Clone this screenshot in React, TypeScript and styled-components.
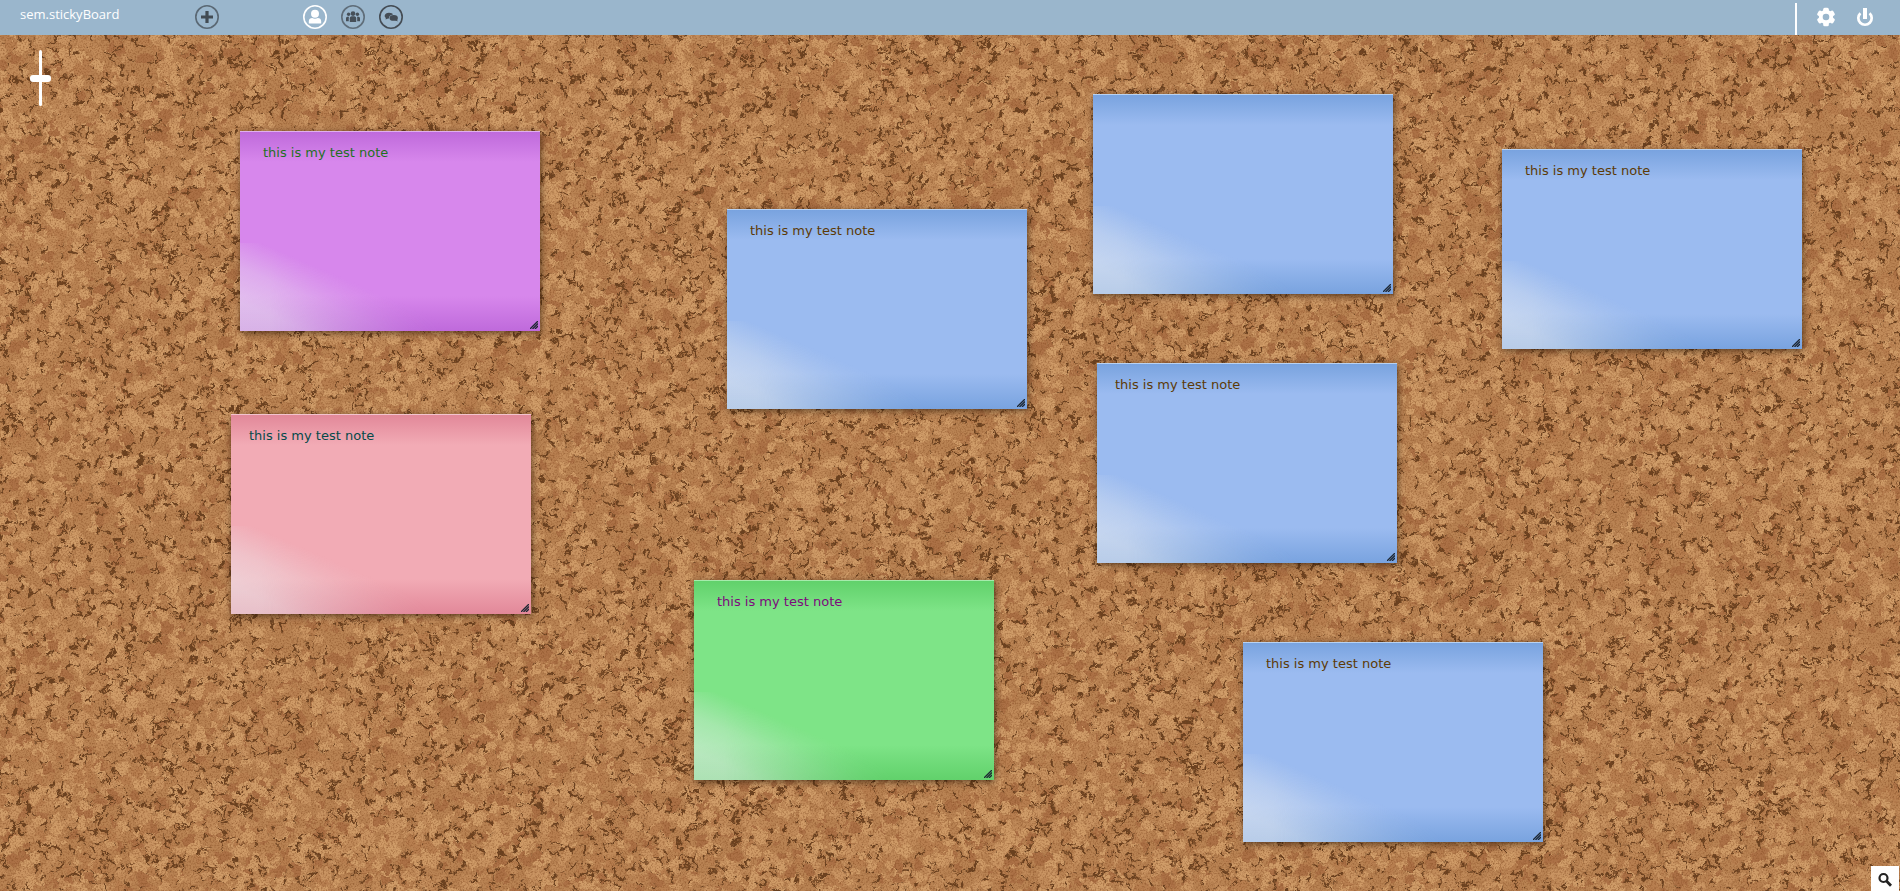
import React, { useMemo } from "react";
import styled, { createGlobalStyle } from "styled-components";

const GlobalStyle = createGlobalStyle`
  * { box-sizing: border-box; }
  body { margin: 0; font-family: "Open Sans", "Liberation Sans", sans-serif; }
`;

const Page = styled.div`
  display: flex;
  flex-direction: column;
  min-height: 100vh;
`;

const Toolbar = styled.header`
  display: flex;
  align-items: center;
  height: 35px;
  padding: 0 25px 0 20px;
  background: #9ab6cc;
  color: #fff;
`;

const Brand = styled.a`
  width: 174px;
  padding-bottom: 7px;
  color: #fff;
  font-size: 13px;
  line-height: 18px;
  text-decoration: none;
`;

const Group = styled.nav<{ $gap: number; $start?: string }>`
  display: flex;
  align-items: center;
  gap: ${(p) => p.$gap}px;
  height: 100%;
  margin-left: ${(p) => p.$start ?? "0"};
`;

const IconButton = styled.button<{ $color: string }>`
  display: flex;
  padding: 0 0 1px;
  border: 0;
  background: none;
  color: ${(p) => p.$color};
  cursor: pointer;
`;

const Divider = styled.span`
  align-self: flex-end;
  width: 2px;
  height: 32px;
  background: #fff;
`;

const Board = styled.main`
  position: relative;
  flex: 1;
  overflow: hidden;
  background: #b8814f;
`;

const Cork = styled.svg`
  position: absolute;
  inset: 0;
  width: 100%;
  height: 100%;
`;

const ZoomSlider = styled.input`
  position: absolute;
  top: 15px;
  left: 30px;
  width: 21px;
  height: 56px;
  margin: 0;
  appearance: none;
  background: none;
  writing-mode: vertical-lr;

  &::-webkit-slider-runnable-track {
    width: 3px;
    height: 100%;
    border-radius: 2px;
    background: #fff;
  }

  &::-webkit-slider-thumb {
    appearance: none;
    width: 21px;
    height: 7px;
    margin-left: -9px;
    border-radius: 3px;
    background: #fff;
  }
`;

const SearchButton = styled.button`
  position: absolute;
  right: 1px;
  bottom: 0;
  display: flex;
  align-items: center;
  justify-content: center;
  width: 28px;
  height: 25px;
  padding: 2px 0 0;
  border: 0;
  background: #fff;
  color: #222;
`;

type Tone = { base: string; dark: string; edge: string; ink: string };

const tones: Record<string, Tone> = {
  violet: { base: "#d787ec", dark: "#bf6adb", edge: "#e0b0ee", ink: "#1f701f" },
  blue: { base: "#9bbbf0", dark: "#79a3df", edge: "#b9d2f2", ink: "#5c3a06" },
  green: { base: "#7ee487", dark: "#61d16b", edge: "#a6ebac", ink: "#7d0a7d" },
  pink: { base: "#f2abb5", dark: "#e28899", edge: "#f3c3ce", ink: "#044a4a" },
};

const Note = styled.article<{ $x: number; $y: number; $tone: Tone }>`
  position: absolute;
  top: ${(p) => p.$y}px;
  left: ${(p) => p.$x}px;
  display: flex;
  width: 300px;
  height: 200px;
  border-top: 1px solid ${(p) => p.$tone.edge};
  background: linear-gradient(
    ${(p) => p.$tone.dark},
    ${(p) => p.$tone.base} 30px,
    ${(p) => p.$tone.base} 164px,
    ${(p) => p.$tone.dark}
  );
  box-shadow: 1px 2px 7px rgba(30, 15, 0, 0.6);
  color: ${(p) => p.$tone.ink};

  &::before {
    content: "";
    position: absolute;
    bottom: 0;
    left: 0;
    width: 210px;
    height: 88px;
    background: linear-gradient(
      203deg,
      transparent 45%,
      rgba(236, 238, 240, 0.35) 64%,
      rgba(236, 238, 240, 0.55) 84%
    );
    mask-image: linear-gradient(to right, #000 30px, transparent 205px);
    pointer-events: none;
  }
`;

const NoteText = styled.textarea<{ $indent: number }>`
  flex: 1;
  padding: 11px 20px 16px ${(p) => p.$indent}px;
  border: 0;
  outline: 0;
  resize: none;
  background: none;
  color: inherit;
  font-family: Verdana, "DejaVu Sans", sans-serif;
  font-size: 13px;
  line-height: 20px;
`;

const Grip = styled.svg`
  position: absolute;
  right: 2px;
  bottom: 2px;
`;

const notes = [
  { tone: "violet", x: 240, y: 96, indent: 23, text: "this is my test note" },
  { tone: "blue", x: 727, y: 174, indent: 23, text: "this is my test note" },
  { tone: "blue", x: 1093, y: 59, indent: 23, text: "" },
  { tone: "blue", x: 1502, y: 114, indent: 23, text: "this is my test note" },
  { tone: "pink", x: 231, y: 379, indent: 18, text: "this is my test note" },
  { tone: "blue", x: 1097, y: 328, indent: 18, text: "this is my test note" },
  { tone: "green", x: 694, y: 545, indent: 23, text: "this is my test note" },
  { tone: "blue", x: 1243, y: 607, indent: 23, text: "this is my test note" },
];

const TILE = 512;
const chipColors = ["#d09d69", "#cf9b67", "#c99462", "#c18b5a", "#b87f50", "#ac7146"];

/** Cork chips scattered over a seamless tile, back to front. */
function corkChips() {
  let seed = 7;
  const rnd = () => {
    seed = (seed * 1664525 + 1013904223) % 4294967296;
    return seed / 4294967296;
  };
  const chips: { d: string; fill: string }[] = [];
  const add = (cx: number, cy: number, rx: number, ry: number, n: number, fill: string) => {
    const turn = rnd() * Math.PI;
    const shape = Array.from({ length: n }, (_, i) => {
      const a = (i / n) * Math.PI * 2 + rnd() * 0.6;
      const k = 0.7 + rnd() * 0.45;
      const px = Math.cos(a) * rx * k;
      const py = Math.sin(a) * ry * k;
      return [px * Math.cos(turn) - py * Math.sin(turn), px * Math.sin(turn) + py * Math.cos(turn)];
    });
    const xs = [cx, cx < 16 ? cx + TILE : cx > TILE - 16 ? cx - TILE : null];
    const ys = [cy, cy < 16 ? cy + TILE : cy > TILE - 16 ? cy - TILE : null];
    let d = "";
    for (const x of xs)
      for (const y of ys)
        if (x !== null && y !== null)
          d += "M" + shape.map(([px, py]) => `${(x + px).toFixed(1)} ${(y + py).toFixed(1)}`).join("L") + "Z";
    chips.push({ d, fill });
  };
  for (let i = 0; i < 7000; i++) {
    const cx = rnd() * TILE;
    const cy = rnd() * TILE;
    const r = rnd();
    if (r < 0.44) add(cx, cy, 3 + rnd() * 5, 0.8 + rnd() * 0.9, 5, "#69401f");
    else {
      const size = 3 + rnd() * 6;
      add(cx, cy, size, size * (0.6 + rnd() * 0.35), 6, chipColors[Math.floor(rnd() * chipColors.length)]);
    }
  }
  return chips;
}

function CorkTexture() {
  const chips = useMemo(corkChips, []);
  return (
    <Cork aria-hidden="true">
      <defs>
        <pattern id="cork" width={TILE} height={TILE} patternUnits="userSpaceOnUse">
          <rect width={TILE} height={TILE} fill="#b98353" />
          {chips.map((c, i) => (
            <path key={i} d={c.d} fill={c.fill} />
          ))}
        </pattern>
        <filter id="rough" x="0" y="0" width="100%" height="100%" colorInterpolationFilters="sRGB">
          <feTurbulence type="fractalNoise" baseFrequency="0.16" numOctaves="3" seed="4" result="n" />
          <feDisplacementMap in="SourceGraphic" in2="n" scale="10" xChannelSelector="R" yChannelSelector="G" result="chips" />
          <feTurbulence type="fractalNoise" baseFrequency="0.6" numOctaves="2" seed="9" />
          <feColorMatrix values="0 0 0 0 0.5  0 0 0 0 0.28  0 0 0 0 0.12  1.4 0 0 0 -0.62" result="grain" />
          <feMerge>
            <feMergeNode in="chips" />
            <feMergeNode in="grain" />
          </feMerge>
        </filter>
      </defs>
      <g filter="url(#rough)">
        <rect x="-10" y="-10" width="102%" height="103%" fill="url(#cork)" />
      </g>
    </Cork>
  );
}

function RoundIcon({ children }: { children: React.ReactNode }) {
  return (
    <svg width="26" height="26" viewBox="0 0 26 26" fill="currentColor" aria-hidden="true">
      <circle cx="13" cy="13" r="11.2" fill="none" stroke="currentColor" strokeWidth="1.6" />
      {children}
    </svg>
  );
}

export default function App() {
  return (
    <Page>
      <GlobalStyle />
      <Toolbar>
        <Brand href="#">sem.stickyBoard</Brand>
        <Group $gap={12}>
          <IconButton $color="#5a6874" aria-label="Add note">
            <RoundIcon>
              <path d="M11.4 7h3.2v4.4H19v3.2h-4.4V19h-3.2v-4.4H7v-3.2h4.4z" fill="#424b53" />
            </RoundIcon>
          </IconButton>
        </Group>
        <Group $gap={12} $start="82px">
          <IconButton $color="#fff" aria-label="My notes">
            <RoundIcon>
              <circle cx="13" cy="9.8" r="4" />
              <path d="M6.8 19.4V17.200C6.800 15 8.400 14 10.200 14C11.900 15 14.100 15 15.800 14C17.600 14 19.200 15 19.200 17.200V19.400Z" />
            </RoundIcon>
          </IconButton>
          <IconButton $color="#5f6d79" aria-label="Group notes">
            <RoundIcon>
              <g fill="#464f58">
                <circle cx="13" cy="9.6" r="2.3" />
                <circle cx="8.6" cy="10.3" r="1.7" />
                <circle cx="17.4" cy="10.3" r="1.7" />
                <path d="M9.800 18V14.200C9.800 12.800 10.800 12.200 13 12.200S16.200 12.800 16.200 14.200V18Z" />
                <path d="M6 17.200V14.200C6 13 6.900 12.500 9 12.700C8.600 13.900 8.800 15.900 8.800 17.200ZM20 17.200V14.200C20 13 19.100 12.500 17 12.700C17.400 13.900 17.200 15.900 17.200 17.200Z" />
              </g>
            </RoundIcon>
          </IconButton>
          <IconButton $color="#444c54" aria-label="Conversations">
            <RoundIcon>
              <path d="M11 8.800C13.400 8.800 14.600 9.600 15 10.500C12.500 10.900 10.800 12.400 10.900 14.500L9.300 14.700L7.600 15.400L7.800 14C6.800 13.300 6.600 12.500 6.700 11.600C7 9.900 8.700 8.800 11 8.800Z" />
              <ellipse cx="15.700" cy="13.900" rx="4.200" ry="2.900" />
              <path d="M17 16L19.600 17.600L19 15Z" />
            </RoundIcon>
          </IconButton>
        </Group>
        <Group $gap={19} $start="auto">
          <Divider />
          <IconButton $color="#fff" aria-label="Settings">
            <svg width="20" height="20" viewBox="0 0 20 20" aria-hidden="true">
              <g fill="currentColor">
                {[0, 60, 120].map((a) => (
                  <rect key={a} x="7.2" y="0.8" width="5.6" height="18.4" rx="1.5" transform={`rotate(${a} 10 10)`} />
                ))}
                <circle cx="10" cy="10" r="7.2" />
              </g>
              <circle cx="10" cy="10" r="3.3" fill="#9ab6cc" />
            </svg>
          </IconButton>
          <IconButton $color="#fff" aria-label="Log out">
            <svg width="20" height="20" viewBox="0 0 20 20" fill="none" stroke="currentColor" aria-hidden="true">
              <path d="M5.4 6.200a6.700 6.700 0 1 0 9.200 0" strokeWidth="2.700" />
              <path d="M10 1v11" strokeWidth="4" />
            </svg>
          </IconButton>
        </Group>
      </Toolbar>
      <Board>
        <CorkTexture />
        <ZoomSlider type="range" min={0} max={100} defaultValue={50} aria-label="Zoom" />
        {notes.map((n, i) => (
          <Note key={i} $x={n.x} $y={n.y} $tone={tones[n.tone]}>
            <NoteText $indent={n.indent} defaultValue={n.text} spellCheck={false} aria-label={`Note ${i + 1}`} />
            <Grip width="8" height="8" viewBox="0 0 8 8" stroke="#1d2733" strokeWidth="1.3" aria-hidden="true">
              <path d="M0 8L8 0M2.5 8L8 2.5M5 8L8 5" />
            </Grip>
          </Note>
        ))}
        <SearchButton aria-label="Search">
          <svg width="16" height="16" viewBox="0 0 16 16" fill="none" stroke="currentColor" aria-hidden="true">
            <circle cx="6.5" cy="6" r="4" strokeWidth="2.2" />
            <path d="M9.5 9l4.5 4.700" strokeWidth="2.800" />
          </svg>
        </SearchButton>
      </Board>
    </Page>
  );
}
